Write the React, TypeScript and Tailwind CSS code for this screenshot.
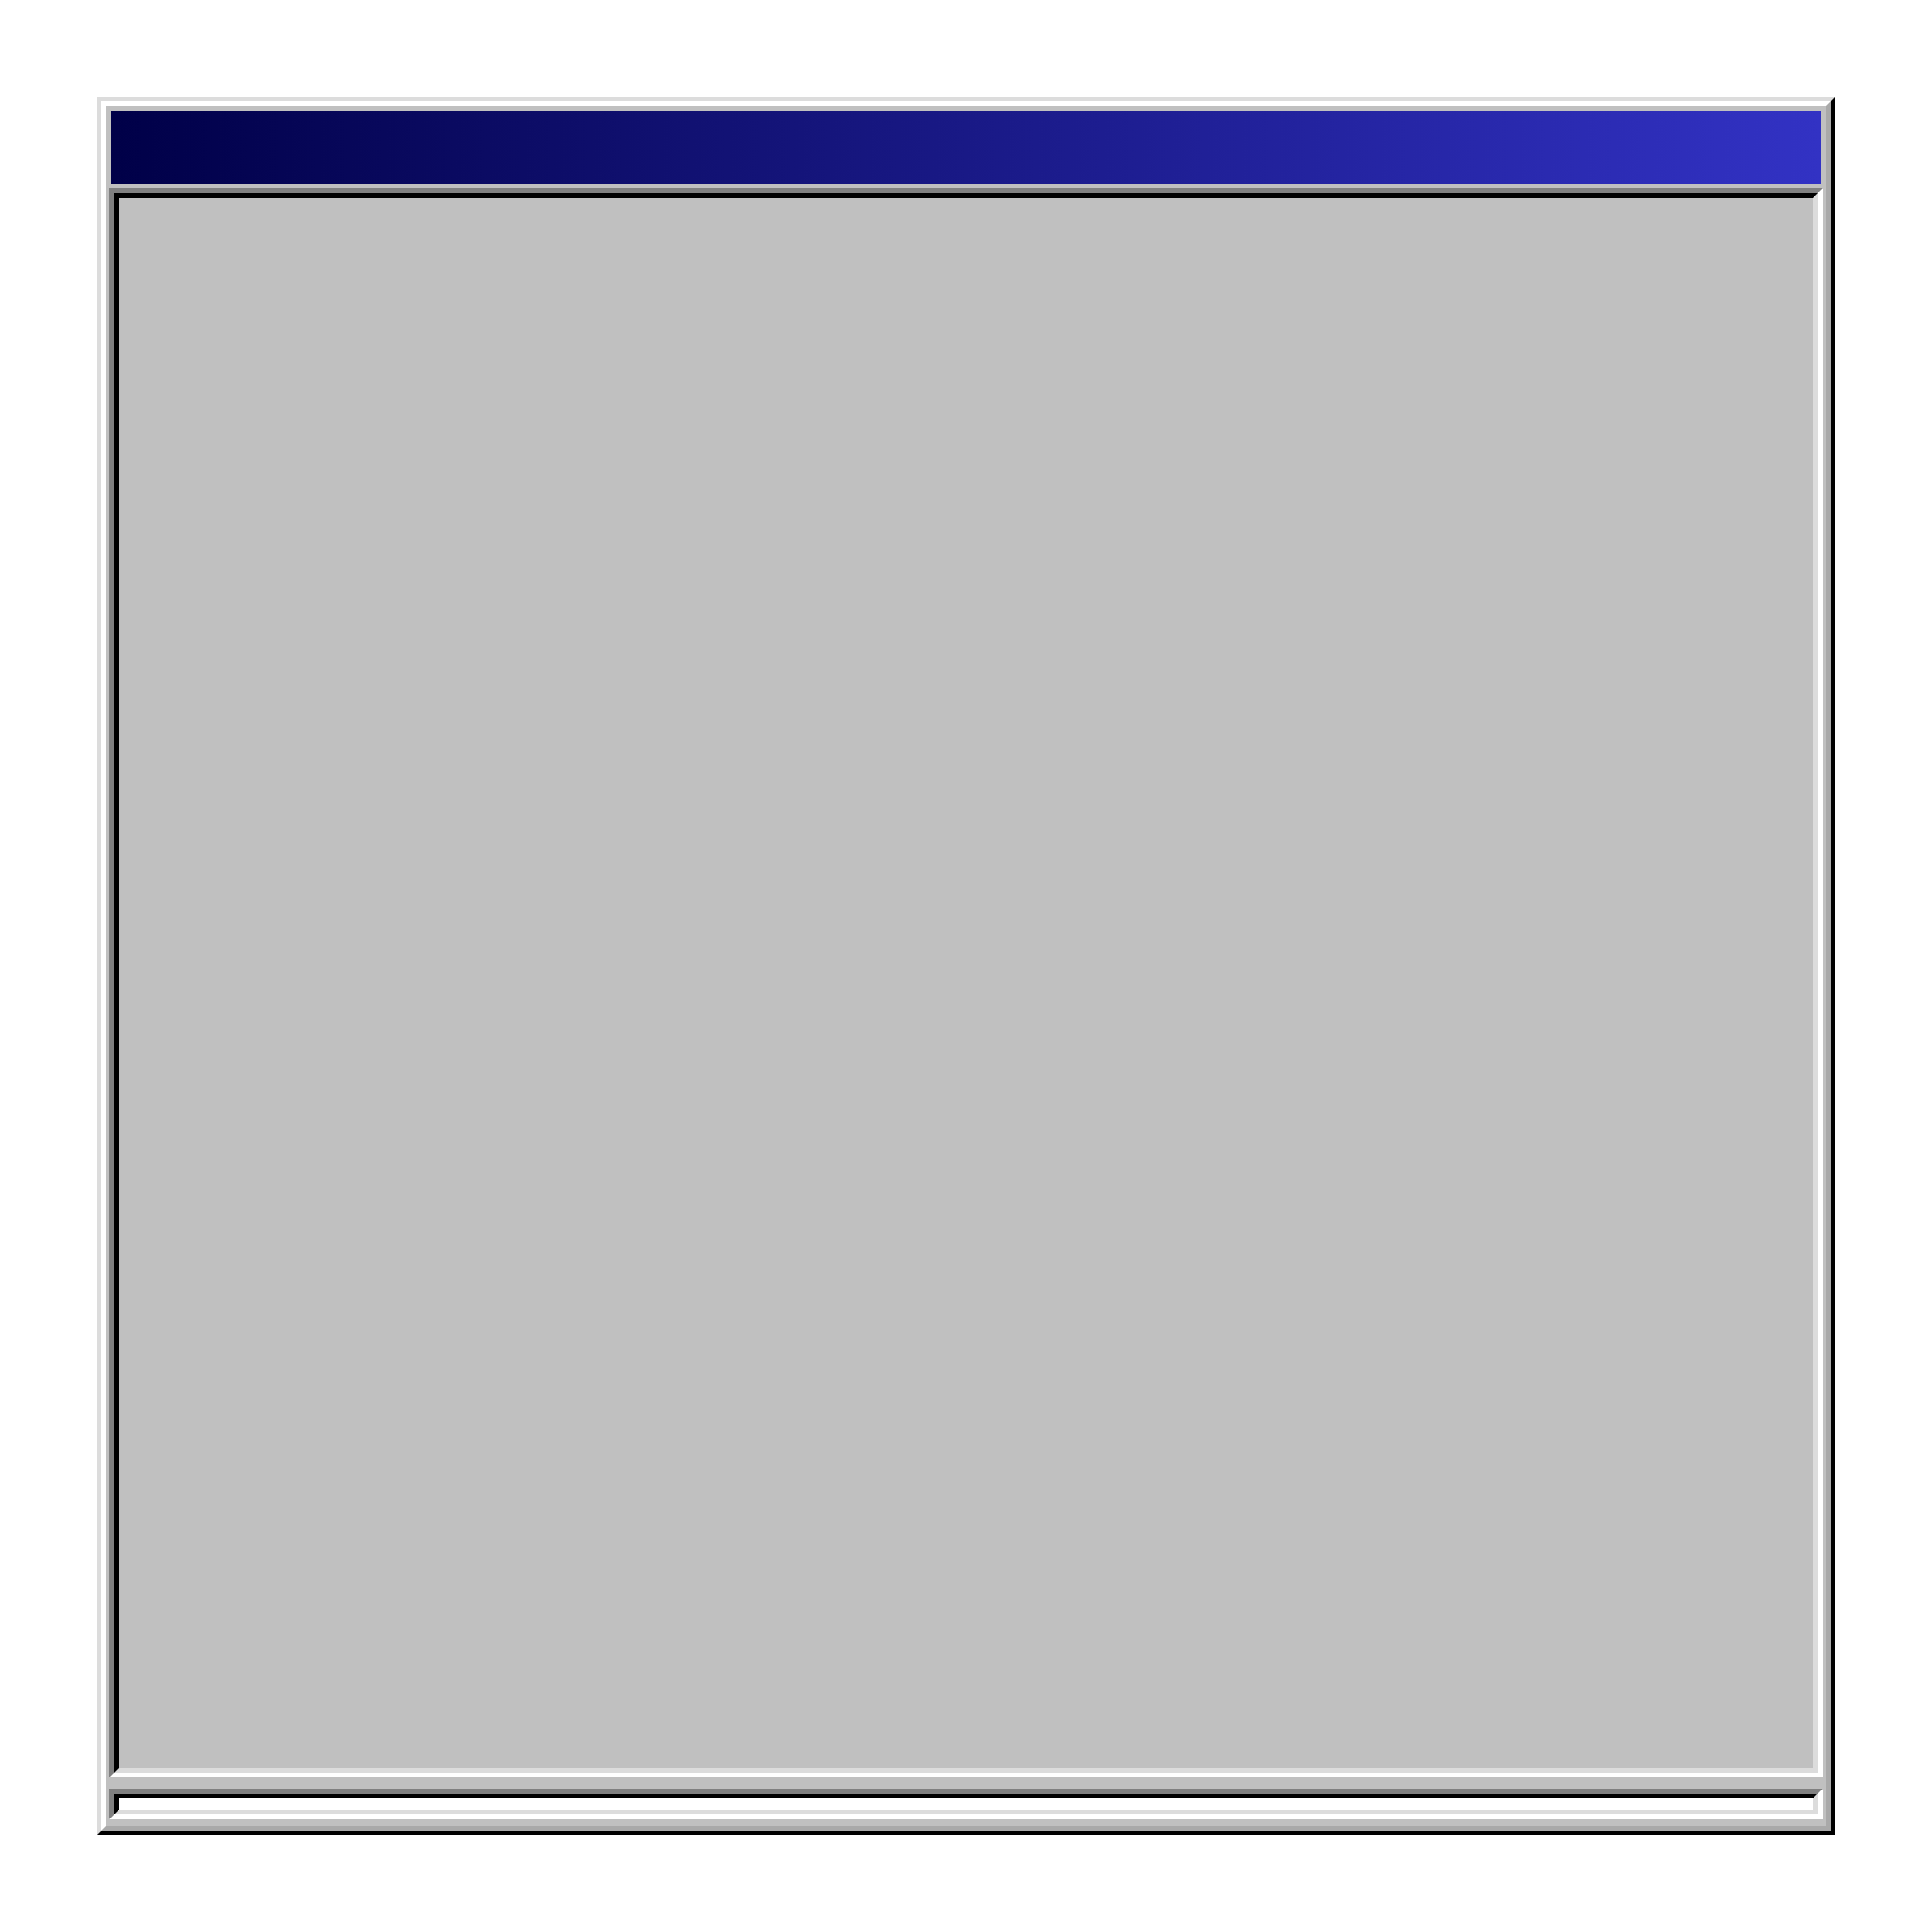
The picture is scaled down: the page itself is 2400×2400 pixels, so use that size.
export default function App() {
  return (
    <div className="w-[2400px] h-[2400px] bg-white p-[120px]">
      {/* outer window bevel */}
      <div className="w-[2160px] h-[2160px] border-[6px] border-t-[#dcdcdc] border-l-[#dcdcdc] border-b-black border-r-black">
        <div className="h-full flex flex-col bg-[#c0c0c0] border-[6px] border-t-white border-l-white border-b-[#a9a9a9] border-r-[#a9a9a9] px-[4px] pt-[6px] pb-[8px]">
          {/* title bar */}
          <div className="mx-[2px] h-[90px] shrink-0 bg-linear-to-r/srgb from-[#000048] to-[#3232c4]" />

          {/* client area, sunken */}
          <div className="mt-[6px] flex-1 border-[6px] border-t-[#808080] border-l-[#808080] border-b-white border-r-white">
            <div className="h-full bg-[#c0c0c0] border-[6px] border-t-black border-l-black border-b-[#dcdcdc] border-r-[#dcdcdc]" />
          </div>

          {/* status bar, sunken */}
          <div className="mt-[14px] h-[38px] shrink-0 border-[6px] border-t-[#808080] border-l-[#808080] border-b-white border-r-white">
            <div className="h-full bg-white border-[6px] border-t-black border-l-black border-b-[#dcdcdc] border-r-[#dcdcdc]" />
          </div>
        </div>
      </div>
    </div>
  );
}
